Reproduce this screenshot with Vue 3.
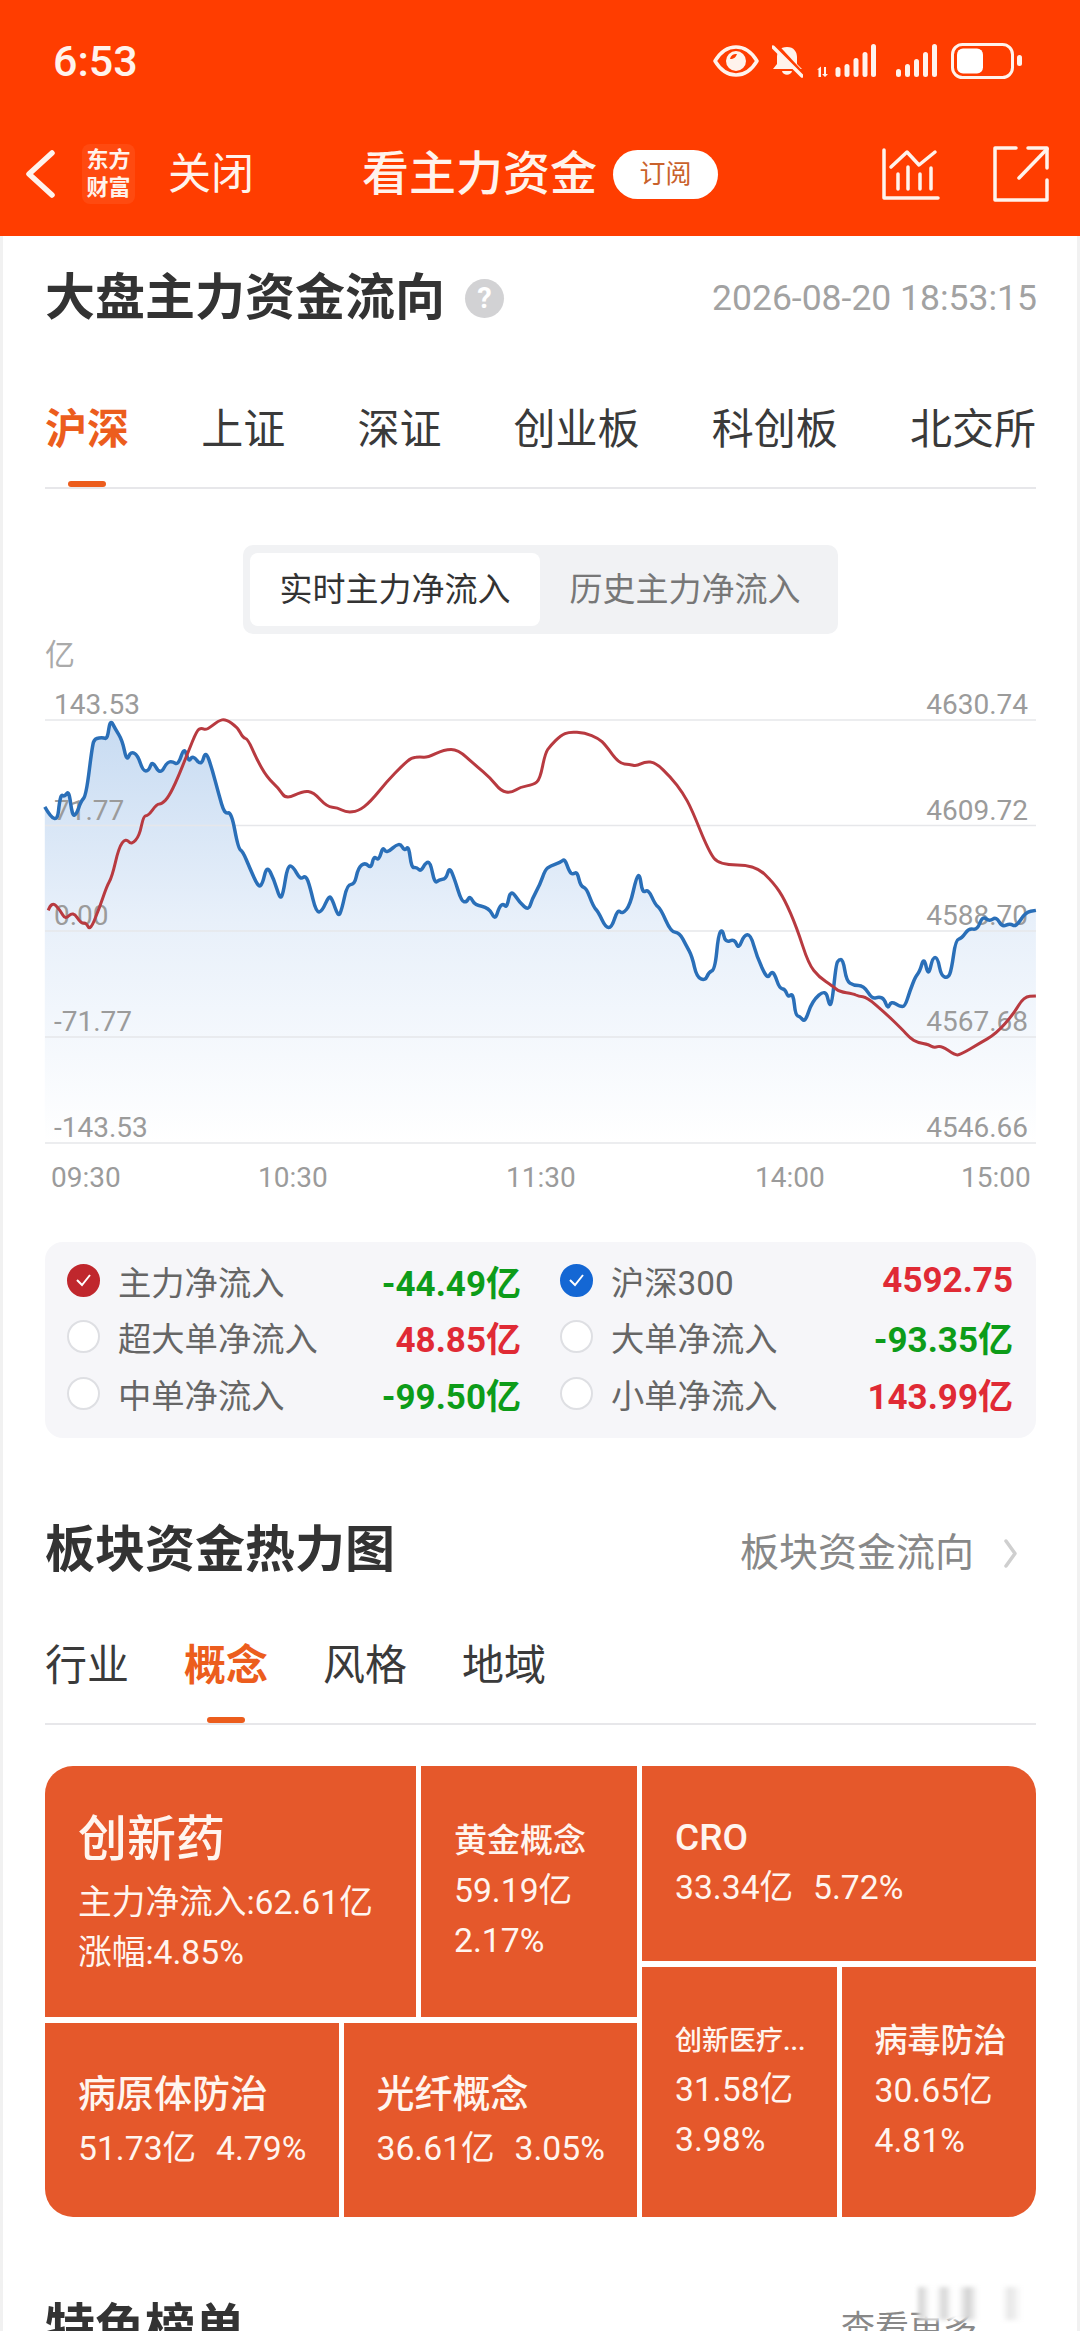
<script setup>
const marketTabs = ['沪深', '上证', '深证', '创业板', '科创板', '北交所']
const sectorTabs = ['行业', '概念', '风格', '地域']

const legend = [
  { name: '主力净流入', value: '-44.49亿', dir: 'down', check: 'red' },
  { name: '沪深300', value: '4592.75', dir: 'up', check: 'blue' },
  { name: '超大单净流入', value: '48.85亿', dir: 'up' },
  { name: '大单净流入', value: '-93.35亿', dir: 'down' },
  { name: '中单净流入', value: '-99.50亿', dir: 'down' },
  { name: '小单净流入', value: '143.99亿', dir: 'up' }
]

// chart sits in page coordinates, so the axis values below are just the y of each line
const gridY = [720, 825.5, 931, 1037, 1143]
const leftAxis = ['143.53', '71.77', '0.00', '-71.77', '-143.53']
const rightAxis = ['4630.74', '4609.72', '4588.70', '4567.68', '4546.66']
const times = [
  { t: '09:30', x: 51 }, { t: '10:30', x: 258 }, { t: '11:30', x: 506 },
  { t: '14:00', x: 755 }, { t: '15:00', x: 961 }
]

// traced from two crops of the chart: left half and right half
const blueA = [130,505,165,562,175,470,188,478,200,460,210,530,222,525,235,490,250,475,268,340,275,320,300,318,312,322,320,268,335,295,355,325,368,382,380,355,400,365,415,408,432,408,442,380,465,418,485,385,500,382,518,392,535,342,548,385,560,365,585,395,597,352,615,400,635,470,652,525,672,518,692,618,705,625,725,670,750,722,762,715,775,663,795,700,813,755,822,740,835,665,850,665,872,702,888,690,900,720,918,790,935,788,955,745,965,755,982,802,992,785,1008,715,1030,715,1040,670,1060,655,1078,672,1085,638,1100,650,1112,612,1122,632,1160,600,1175,625,1187,610,1195,670,1210,668,1222,680,1237,655,1250,655,1262,712,1275,702,1295,700,1305,667,1320,700,1340,760,1355,763,1365,745,1378,770,1420,778,1438,812,1450,775,1462,767,1472,778,1483,727,1510,765,1535,785,1545,755]
const blueB = [0,715,15,675,30,665,60,655,72,645,85,680,95,688,108,680,118,720,135,725,155,775,170,790,190,830,208,832,225,782,240,795,262,770,280,695,290,688,297,738,315,728,335,770,350,780,380,843,405,845,425,880,442,910,455,965,480,975,490,952,508,945,518,850,530,835,538,872,565,862,577,890,592,852,612,850,630,910,660,972,672,950,682,958,695,995,712,998,720,1020,735,1008,742,1068,755,1072,770,1088,790,1030,830,998,840,1042,848,1035,860,930,868,918,880,918,890,975,910,988,940,988,965,1025,985,1018,1000,1025,1010,1052,1020,1030,1045,1045,1060,1045,1075,1000,1090,965,1103,950,1115,910,1128,965,1140,912,1155,912,1165,962,1185,968,1195,945,1207,865,1225,860,1245,833,1270,838,1285,800,1305,815,1325,802,1342,830,1365,820,1382,830,1410,790,1440,785]
const redA = [140,785,150,760,175,785,190,810,212,788,235,820,250,818,262,840,290,775,310,720,325,695,345,615,365,590,382,608,405,583,417,528,430,530,455,498,470,497,490,478,515,430,545,360,572,298,585,292,600,298,635,272,655,268,690,290,705,318,720,322,745,375,775,425,810,455,830,485,880,462,910,465,950,505,980,507,1005,520,1040,517,1075,492,1125,435,1170,392,1195,372,1220,370,1240,372,1290,350,1330,350,1380,392,1425,428,1455,463,1485,467,1510,452,1550,445]
const redB = [0,430,15,360,30,340,60,312,85,302,130,305,170,320,190,338,230,388,260,390,280,395,305,383,335,385,380,425,415,468,440,510,490,625,520,662,625,662,680,712,710,755,745,830,780,930,810,965,850,990,870,1005,910,1010,925,1017,950,1020,1000,1060,1050,1105,1075,1130,1095,1142,1130,1148,1145,1157,1165,1150,1205,1176,1220,1175,1275,1145,1325,1118,1375,1065,1405,1018,1440,1016]

function toPage(a, b) {
  const pts = []
  for (let i = 0; i < a.length; i += 2) pts.push([a[i] / 2.904, 620 + a[i + 1] / 2.703])
  for (let i = 0; i < b.length; i += 2) pts.push([540 + b[i] / 2.904, 620 + b[i + 1] / 2.703])
  return pts
}

function smooth(pts) {
  let d = `M${pts[0][0].toFixed(1)} ${pts[0][1].toFixed(1)}`
  for (let i = 1; i < pts.length - 1; i++) {
    const mx = (pts[i][0] + pts[i + 1][0]) / 2
    const my = (pts[i][1] + pts[i + 1][1]) / 2
    d += `Q${pts[i][0].toFixed(1)} ${pts[i][1].toFixed(1)} ${mx.toFixed(1)} ${my.toFixed(1)}`
  }
  const last = pts[pts.length - 1]
  return d + `L${last[0].toFixed(1)} ${last[1].toFixed(1)}`
}

const bluePts = toPage(blueA, blueB)
const bluePath = smooth(bluePts)
const redPath = smooth(toPage(redA, redB))
const areaPath = bluePath + `L1036 1143L${bluePts[0][0].toFixed(1)} 1143Z`
</script>

<template>
  <div class="page">
    <header class="top">
      <div class="status">
        <span class="clock">6:53</span>
        <div class="status-icons">
          <svg width="46" height="32" viewBox="0 0 46 32" fill="none">
            <path d="M2 16C8 6 15 2 23 2s15 4 21 14c-6 10-13 14-21 14S8 26 2 16Z" stroke="#fff3ec" stroke-width="3.5" stroke-linejoin="round"/>
            <circle cx="23" cy="16" r="10" fill="#fff3ec"/>
            <path d="M17 14a6 6 0 0 1 7-5c-1 3-3 5-7 5Z" fill="#ff3d00"/>
          </svg>
          <svg width="31" height="33" viewBox="0 0 31 33" fill="none">
            <path d="M15 2c7 0 10 5 10 10v7l5 5H1l4-5v-7c0-5 3-10 10-10Z" fill="#fff3ec"/>
            <path d="M10 26c1 5 9 5 10 0Z" fill="#fff3ec"/>
            <path d="M3 0l27 29" stroke="#ff3d00" stroke-width="5"/>
            <path d="M1 2l29 29" stroke="#fff3ec" stroke-width="3.5" stroke-linecap="round"/>
          </svg>
          <svg width="60" height="34" viewBox="0 0 60 34" fill="#fff3ec">
            <path d="M3 24l2-1.500V33H2.500V25.500L1 26ZM8 23h2v7h2l-3 3-3-3h2Z"/>
            <rect x="19.500" y="23" width="5" height="10" rx="2.500"/>
            <rect x="28.500" y="20" width="5" height="13" rx="2.500"/>
            <rect x="37.500" y="14" width="5" height="19" rx="2.500"/>
            <rect x="46.500" y="8" width="5" height="25" rx="2.500"/>
            <rect x="55" y="0" width="5" height="33" rx="2.500"/>
          </svg>
          <svg class="sim-2" width="42" height="34" viewBox="0 0 42 34" fill="#fff3ec">
            <rect x="0" y="25" width="5" height="8" rx="2.500"/>
            <rect x="9" y="20" width="5" height="13" rx="2.500"/>
            <rect x="18" y="15" width="5" height="18" rx="2.500"/>
            <rect x="27" y="8" width="5" height="25" rx="2.500"/>
            <rect x="36" y="0" width="5" height="33" rx="2.500"/>
          </svg>
          <svg width="72" height="36" viewBox="0 0 72 36" fill="none">
            <rect x="1.500" y="1.500" width="60" height="33" rx="10" stroke="#fff3ec" stroke-width="3"/>
            <rect x="6" y="5.500" width="26" height="25" rx="6" fill="#fff"/>
            <rect x="66" y="12" width="5" height="11" rx="2.500" fill="#fff3ec"/>
          </svg>
        </div>
      </div>
      <nav class="nav">
        <svg class="back" width="30" height="48" viewBox="0 0 30 48" fill="none">
          <path d="M27 3L4 24l23 21" stroke="#fff3ec" stroke-width="5.500" stroke-linecap="round" stroke-linejoin="round"/>
        </svg>
        <div class="logo"><span>东方</span><span>财富</span></div>
        <span class="close">关闭</span>
        <span class="title">看主力资金</span>
        <span class="sub">订阅</span>
        <div class="nav-icons">
          <svg width="58" height="52" viewBox="0 0 58 52" fill="none" stroke="#fff3ec" stroke-width="3.500" stroke-linecap="round" stroke-linejoin="round">
            <path d="M2 2v48h54"/>
            <path d="M9 19L25 4l12 13L53 4"/>
            <path d="M16 26v15M26 19v22M38 26v15M49 20v21"/>
          </svg>
          <svg width="56" height="56" viewBox="0 0 56 56" fill="none" stroke="#fff3ec" stroke-width="3.500" stroke-linecap="round" stroke-linejoin="round">
            <path d="M23 2H2v52h52V34"/>
            <path d="M26 32L54 3"/>
            <path d="M35 2h19v20"/>
          </svg>
        </div>
      </nav>
    </header>

    <main class="body">
      <div class="head">
        <h2>大盘主力资金流向</h2>
        <span class="help">?</span>
        <span class="stamp">2026-08-20 18:53:15</span>
      </div>

      <div class="tabs market">
        <span v-for="(t, i) in marketTabs" :key="t" class="tab" :class="{ on: i === 0 }">{{ t }}</span>
      </div>

      <div class="segment">
        <span class="seg on">实时主力净流入</span>
        <span class="seg">历史主力净流入</span>
      </div>

      <svg class="chart" width="1000" height="566" viewBox="40 634 1000 566">
        <defs>
          <linearGradient id="area" gradientUnits="userSpaceOnUse" x1="0" y1="700" x2="0" y2="1143">
            <stop offset="0" stop-color="#c4d9f1"/>
            <stop offset="0.5" stop-color="#e8f0fa"/>
            <stop offset="1" stop-color="#ffffff"/>
          </linearGradient>
        </defs>
        <text class="unit" x="45" y="665">亿</text>
        <path :d="areaPath" fill="url(#area)"/>
        <line v-for="y in gridY" :key="y" x1="45" x2="1036" :y1="y" :y2="y" stroke="#e6e7ea" stroke-width="1.500"/>
        <text v-for="(l, i) in leftAxis" :key="l" class="axis" x="54" :y="gridY[i] - 6">{{ l }}</text>
        <text v-for="(l, i) in rightAxis" :key="l" class="axis" x="1028" text-anchor="end" :y="gridY[i] - 6">{{ l }}</text>
        <text v-for="t in times" :key="t.t" class="axis" :x="t.x" y="1187">{{ t.t }}</text>
        <path :d="bluePath" fill="none" stroke="#2a6fb8" stroke-width="3.500" stroke-linejoin="round"/>
        <path :d="redPath" fill="none" stroke="#b83a40" stroke-width="3" stroke-linejoin="round"/>
      </svg>

      <div class="legend">
        <div v-for="row in legend" :key="row.name" class="legend-row">
          <span class="dot" :class="row.check">
            <svg v-if="row.check" width="19" height="15" viewBox="0 0 19 15" fill="none">
              <path d="M3 7l5 5 8-10" stroke="#fff" stroke-width="2"/>
            </svg>
          </span>
          <span class="legend-name">{{ row.name }}</span>
          <span class="legend-val" :class="row.dir">{{ row.value }}</span>
        </div>
      </div>

      <div class="head-2">
        <h2>板块资金热力图</h2>
        <span class="more">板块资金流向</span>
        <svg width="13" height="29" viewBox="0 0 13 29" fill="none">
          <path d="M2 2l9 12.500L2 27" stroke="#cfcfcf" stroke-width="3.500" stroke-linecap="round" stroke-linejoin="round"/>
        </svg>
      </div>

      <div class="tabs sector">
        <span v-for="(t, i) in sectorTabs" :key="t" class="tab" :class="{ on: i === 1 }">{{ t }}</span>
      </div>

      <div class="heat">
        <div class="heat-left">
          <div class="heat-row top-row">
            <div class="tile big">
              <div class="t1">创新药</div>
              <div class="t2">主力净流入:62.61亿</div>
              <div class="t2">涨幅:4.85%</div>
            </div>
            <div class="tile gold">
              <div class="t3">黄金概念</div>
              <div class="t2">59.19亿</div>
              <div class="t2">2.17%</div>
            </div>
          </div>
          <div class="heat-row low-row">
            <div class="tile half">
              <div class="t4">病原体防治</div>
              <div class="t2 pair">51.73亿&nbsp;&nbsp;4.79%</div>
            </div>
            <div class="tile half">
              <div class="t4">光纤概念</div>
              <div class="t2 pair">36.61亿&nbsp;&nbsp;3.05%</div>
            </div>
          </div>
        </div>
        <div class="heat-right">
          <div class="tile cro">
            <div class="t3 latin">CRO</div>
            <div class="t2 pair">33.34亿&nbsp;&nbsp;5.72%</div>
          </div>
          <div class="heat-row bottom-row">
            <div class="tile half">
              <div class="t5">创新医疗...</div>
              <div class="t2">31.58亿</div>
              <div class="t2">3.98%</div>
            </div>
            <div class="tile half">
              <div class="t3">病毒防治</div>
              <div class="t2">30.65亿</div>
              <div class="t2">4.81%</div>
            </div>
          </div>
        </div>
      </div>

      <div class="head-3">
        <h2>特色榜单</h2>
        <span class="more small">查看更多</span>
        <svg class="more-arrow" width="13" height="29" viewBox="0 0 13 29" fill="none">
          <path d="M2 2l9 12.500L2 27" stroke="#cfcfcf" stroke-width="3.500" stroke-linecap="round" stroke-linejoin="round"/>
        </svg>
        <div class="smear"></div>
      </div>
    </main>
  </div>
</template>

<style scoped>
.page {
  height: 2331px;
  overflow: hidden;
  background: #fff;
  font-family: Roboto, "Noto Sans CJK SC", sans-serif;
  color: #333;
}

.top {
  background: #ff3d00;
  height: 236px;
  color: #fff3ec;
}

.status {
  height: 118px;
  padding: 4px 57px 0 53px;
  box-sizing: border-box;
  display: flex;
  align-items: center;
  justify-content: space-between;
}

.clock {
  font-size: 43px;
  font-weight: 500;
}

.status-icons {
  display: flex;
  align-items: center;
}

.status-icons svg + svg {
  margin-left: 13px;
}

.status-icons .sim-2 {
  margin-left: 20px;
}

.nav {
  height: 112px;
  display: flex;
  align-items: center;
  padding: 0 31px 0 25px;
}

.back {
  flex: none;
}

.logo {
  width: 53px;
  height: 60px;
  margin-left: 27px;
  background: #ff4a10;
  border-radius: 8px;
  display: flex;
  flex-direction: column;
  align-items: center;
  justify-content: center;
  font-size: 22px;
  line-height: 28px;
  font-weight: 700;
}

.close {
  margin-left: 33px;
  font-size: 43px;
  line-height: 50px;
}

.title {
  margin-left: 108px;
  font-size: 47px;
  line-height: 56px;
  font-weight: 500;
}

.sub {
  margin-left: 16px;
  width: 105px;
  height: 49px;
  border-radius: 25px;
  background: #fff;
  color: #c9622c;
  font-size: 26px;
  line-height: 49px;
  text-align: center;
}

.nav-icons {
  margin-left: auto;
  display: flex;
  align-items: center;
  gap: 53px;
}

.body {
  padding: 0 44px 0 45px;
  box-shadow: inset 3px 0 0 #f1f1f1, inset -3px 0 0 #f1f1f1;
  height: 2095px;
  box-sizing: border-box;
}

h2 {
  margin: 0;
  font-size: 50px;
  line-height: 70px;
  font-weight: 700;
  color: #333;
}

.head {
  height: 124px;
  display: flex;
  align-items: center;
}

.help {
  width: 39px;
  height: 39px;
  margin-left: 20px;
  border-radius: 50%;
  background: #d2d2d4;
  color: #fff;
  font-size: 29px;
  font-weight: 700;
  line-height: 39px;
  text-align: center;
}

.stamp {
  margin-left: auto;
  margin-right: -1px;
  font-size: 35.500px;
  color: #a2a2a2;
  white-space: nowrap;
}

.tabs {
  display: flex;
  border-bottom: 2px solid #e7e7ea;
}

.market {
  justify-content: space-between;
  padding: 41px 0 28px;
}

.sector {
  gap: 55px;
  padding: 52px 0 28px;
}

.tab {
  position: relative;
  font-size: 42px;
  line-height: 58px;
  color: #3a3a3a;
}

.tab.on {
  color: #ec5d1d;
  font-weight: 700;
}

.tab.on::after {
  content: "";
  position: absolute;
  left: 50%;
  bottom: -28px;
  width: 38px;
  height: 6px;
  margin-left: -19px;
  border-radius: 3px;
  background: #ec5d1d;
}

.segment {
  width: 595px;
  height: 89px;
  margin: 56px 0 0 198px;
  box-sizing: border-box;
  padding: 8px 7px;
  display: flex;
  background: #f1f2f4;
  border-radius: 10px;
}

.seg {
  width: 290px;
  line-height: 74px;
  text-align: center;
  font-size: 33px;
  color: #777;
}

.seg.on {
  background: #fff;
  border-radius: 8px;
  color: #333;
}

.chart {
  display: block;
  margin-left: -5px;
}

.unit {
  font-size: 30px;
  fill: #aaa;
}

.axis {
  font-size: 28px;
  fill: #9b9b9b;
}

.legend {
  margin-top: 42px;
  height: 196px;
  box-sizing: border-box;
  padding: 10px 22px 0 22px;
  display: grid;
  grid-template-columns: 454px 453px;
  column-gap: 39px;
  grid-auto-rows: 56.500px;
  background: #f6f6f9;
  border-radius: 18px;
}

.legend-row {
  display: flex;
  align-items: center;
}

.dot {
  width: 33px;
  height: 33px;
  box-sizing: border-box;
  border-radius: 50%;
  border: 2px solid #dedfe3;
  background: #fff;
  display: flex;
  align-items: center;
  justify-content: center;
  flex: none;
}

.dot.red {
  background: #c0272d;
  border-color: #c0272d;
}

.dot.blue {
  background: #1467d4;
  border-color: #1467d4;
}

.legend-name {
  margin-left: 18px;
  font-size: 33.300px;
  color: #666;
}

.legend-val {
  margin-left: auto;
  font-size: 35px;
  font-weight: 700;
}

.legend-val.up {
  color: #e02a35;
}

.legend-val.down {
  color: #0d9c19;
}

.head-2 {
  height: 70px;
  margin-top: 77px;
  display: flex;
  align-items: center;
}

.more {
  margin-left: auto;
  margin-top: -3px;
  font-size: 39px;
  color: #888;
}

.head-2 svg {
  margin: 6px 19px 0 30px;
}

.heat {
  margin-top: 41px;
  height: 451px;
  display: flex;
  gap: 5px;
  border-radius: 28px;
  overflow: hidden;
}

.heat-left {
  width: 592px;
  display: flex;
  flex-direction: column;
  gap: 6px;
}

.heat-right {
  flex: 1;
  display: flex;
  flex-direction: column;
  gap: 6px;
}

.heat-row {
  display: flex;
  gap: 5px;
}

.top-row {
  height: 251px;
}

.low-row {
  height: 194px;
}

.bottom-row {
  height: 250px;
}

.cro {
  height: 195px;
}

.tile {
  box-sizing: border-box;
  padding: 0 0 3px 33px;
  background: #e5582b;
  color: #fff5ef;
  display: flex;
  flex-direction: column;
  justify-content: center;
  white-space: nowrap;
}

.big {
  width: 371px;
}

.gold {
  flex: 1;
}

.half {
  flex: 1;
}

.t1 {
  font-size: 49px;
  line-height: 76px;
  font-weight: 500;
}

.t2 {
  font-size: 33.700px;
  line-height: 50px;
}

.t2.pair {
  word-spacing: 1.500px;
}

.t3 {
  font-size: 33px;
  line-height: 51px;
  font-weight: 500;
}

.t3.latin {
  font-size: 37px;
}

.t4 {
  font-size: 38px;
  line-height: 60px;
  font-weight: 500;
}

.t5 {
  font-size: 27px;
  line-height: 48px;
  font-weight: 500;
}

.head-3 {
  position: relative;
  height: 70px;
  margin-top: 76px;
  display: flex;
  align-items: center;
}

.more.small {
  font-size: 34px;
  margin-top: -6px;
  margin-right: 27px;
}

.more-arrow {
  margin: 38px 19px 0 0;
}

/* smeared watermark at the very bottom of the shot */
.smear {
  position: absolute;
  left: 873px;
  top: -6px;
  width: 150px;
  height: 33px;
  background:
    linear-gradient(90deg, #d8d8d8 0 4px, #fff 12px 18px, #d4d4d4 26px, #fff 34px 40px, #d0d0d0 50px, #fff 60px 84px, #e6e6e6 92px, #fff 104px),
    #fff;
  filter: blur(2px);
}
</style>

<style>
html,
body {
  margin: 0;
  background: #fff;
}
</style>
